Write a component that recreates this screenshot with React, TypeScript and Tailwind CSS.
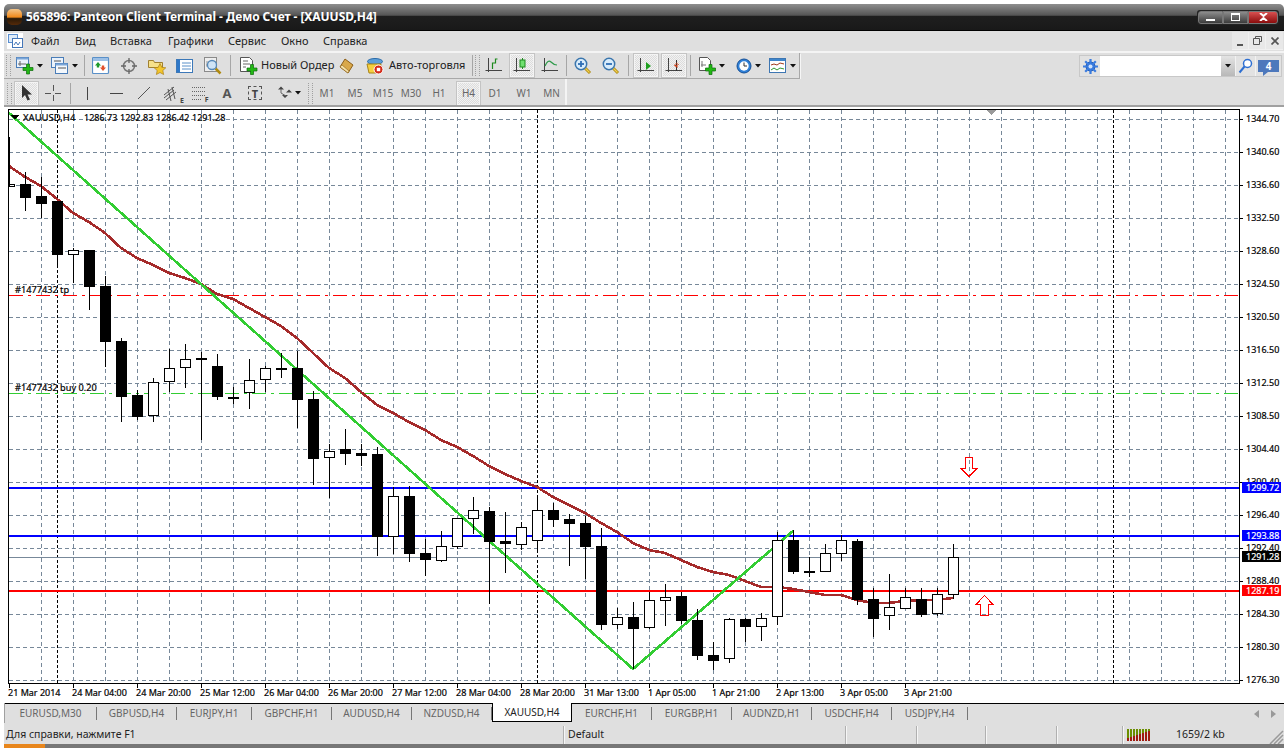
import type { ReactNode } from "react";

const candles: number[][] = [
  [172,184,198,211,1],[177,196,204,218,1],[201,201,255,268,1],[248,250,255,283,0],[250,250,287,310,1],
  [276,286,342,367,1],[338,341,397,422,1],[390,395,417,420,1],[378,382,416,422,0],[349,368,382,392,0],
  [344,359,368,388,0],[352,358,360,440,1],[354,366,397,400,1],[387,397,399,404,1],[359,380,393,409,0],
  [366,368,380,392,0],[353,368,369,378,1],[351,368,400,428,1],[391,399,459,485,1],[444,451,458,498,0],
  [429,449,454,465,1],[444,453,456,466,1],[447,454,537,556,1],[487,496,537,554,0],[486,496,554,562,1],
  [539,553,560,576,1],[531,546,561,562,0],[518,518,547,549,0],[497,510,519,534,0],[507,511,542,604,1],
  [512,541,544,573,1],[522,527,545,550,0],[498,510,541,550,0],[503,510,520,527,1],[514,519,524,566,1],
  [516,523,547,579,1],[528,546,625,630,1],[608,617,625,629,0],[602,617,629,669,1],[592,600,628,629,0],
  [584,597,601,626,0],[592,596,621,624,1],[609,620,656,660,1],[642,655,661,670,1],[618,619,659,663,0],
  [618,619,627,642,1],[613,618,627,641,0],[532,540,617,625,0],[530,540,572,574,1],[557,571,572,577,1],
  [544,553,572,572,0],[535,540,554,561,0],[539,541,600,605,1],[588,599,619,637,1],[574,607,616,630,0],
  [588,597,609,609,0],[588,599,615,617,1],[588,594,614,616,0],[544,557,595,599,0],
];

const ma =
  "9,166 25,177 41,186 57,199 73,213 89,222 105,233 121,248 137,258 153,265 169,273 185,278 201,284 217,294 233,299 249,308 265,317 281,326 297,338 313,353 329,368 345,378 361,392 377,405 393,413 409,422 425,430 441,440 457,447 473,456 489,466 505,474 521,481 537,487 553,497 569,505 585,513 601,523 617,532 633,543 649,550 665,553 681,560 697,567 713,572 729,575 745,581 761,587 777,587 793,589 809,592 825,595 841,595 857,600 873,603 889,603 905,601 921,600 937,600 953,598";

const prices = ["1344.70","1340.60","1336.60","1332.50","1328.60","1324.50","1320.50","1316.50","1312.50","1308.50","1304.40","1300.40","1296.40","1292.40","1288.40","1284.30","1280.30","1276.30"];
const dates = ["21 Mar 2014","24 Mar 04:00","24 Mar 20:00","25 Mar 12:00","26 Mar 04:00","26 Mar 20:00","27 Mar 12:00","28 Mar 04:00","28 Mar 20:00","31 Mar 13:00","1 Apr 05:00","1 Apr 21:00","2 Apr 13:00","3 Apr 05:00","3 Apr 21:00"];
const vgrid = Array.from({ length: 38 }, (_, i) => 41 + 32 * i).filter((x) => x < 1239);

const menus = [
  { t: "Файл", c: "w-[44px]" }, { t: "Вид", c: "w-[35px]" }, { t: "Вставка", c: "w-[58px]" },
  { t: "Графики", c: "w-[60px]" }, { t: "Сервис", c: "w-[53px]" }, { t: "Окно", c: "w-[42px]" }, { t: "Справка", c: "w-[60px]" },
];

const tabs = [
  { t: "EURUSD,M30", c: "w-[92px]" }, { t: "GBPUSD,H4", c: "w-[80px]" }, { t: "EURJPY,H1", c: "w-[75px]" },
  { t: "GBPCHF,H1", c: "w-[80px]" }, { t: "AUDUSD,H4", c: "w-[80px]" }, { t: "NZDUSD,H4", c: "w-[80px]" },
  { t: "XAUUSD,H4", c: "w-[80px]", on: true },
  { t: "EURCHF,H1", c: "w-[80px]" }, { t: "EURGBP,H1", c: "w-[80px]" }, { t: "AUDNZD,H1", c: "w-[80px]" },
  { t: "USDCHF,H4", c: "w-[80px]" }, { t: "USDJPY,H4", c: "w-[76px]" },
];

const pressedCls =
  "border border-[#c4c4c4] bg-[repeating-conic-gradient(#f2f2f2_0_25%,#dcdcdc_0_50%)] bg-[length:2px_2px] shadow-[inset_0_0_0_1px_#f4f4f4]";

function Btn({ className = "w-[28px]", on, children }: { className?: string; on?: boolean; children: ReactNode }) {
  return <div className={`flex h-[25px] shrink-0 items-center justify-center ${className} ${on ? pressedCls : ""}`}>{children}</div>;
}
const Sep = ({ className = "" }: { className?: string }) => <div className={`h-[21px] w-px shrink-0 bg-[#a6a6a6] ${className}`} />;
const Caret = () => <svg width="6" height="4" className="ml-[3px]"><path d="M0 0h6L3 3.500z" fill="#111" /></svg>;
const Grip = ({ className = "" }: { className?: string }) => (
  <div className={`h-[21px] w-[5px] shrink-0 border-x border-dotted border-[#a0a0a0] ${className}`} />
);
const Plus = ({ x, y }: { x: number; y: number }) => (
  <path transform={`translate(${x} ${y})`} d="M3.500 0h3v3.500H10v3H6.500V10h-3V6.500H0v-3h3.500z" fill="#22b814" stroke="#0b6b0b" strokeWidth=".7" />
);

const Ico = ({ w = 18, h = 18, children }: { w?: number; h?: number; children: ReactNode }) => (
  <svg width={w} height={h} viewBox={`0 0 ${w} ${h}`} className="shrink-0">{children}</svg>
);

const Axes = () => <path d="M3.500 1v14M.5 13.500H17" stroke="#444" fill="none" />;

function Lens({ mark }: { mark: "in" | "out" }) {
  return (
    <Ico>
      <path d="M10 10l6 6" stroke="#b08a10" strokeWidth="3" />
      <path d="M10.500 10.500l5 5" stroke="#f0d050" strokeWidth="1.200" />
      <circle cx="7" cy="7" r="5.700" fill="#d8ecfb" stroke="#3b76ad" strokeWidth="1.500" />
      <path d="M4 7h6" stroke="#2f6fb5" strokeWidth="1.800" />
      {mark === "in" && <path d="M7 4v6" stroke="#2f6fb5" strokeWidth="1.800" />}
    </Ico>
  );
}

function ChartPane() {
  const pxDash = "4 3";
  return (
    <svg viewBox="4 107 1280 596" width="1280" height="596" className="block" shapeRendering="crispEdges">
      {vgrid.map((x) => (
        <line key={x} x1={x + 0.5} x2={x + 0.5} y1="110" y2="683" stroke="#778899" strokeDasharray={pxDash} />
      ))}
      {prices.map((_, i) => (
        <line key={i} x1="9" x2="1239" y1={119.5 + 33 * i} y2={119.5 + 33 * i} stroke="#778899" strokeDasharray={pxDash} />
      ))}
      {[57, 537, 1113].map((x) => (
        <line key={x} x1={x + 0.5} x2={x + 0.5} y1="110" y2="683" stroke="#000" strokeDasharray="3 2" />
      ))}

      <line x1="9" x2="1239" y1="295.500" y2="295.500" stroke="#ff0000" strokeDasharray="14 5 3 5" />
      <line x1="9" x2="1239" y1="393.500" y2="393.500" stroke="#32cd32" strokeDasharray="14 5 3 5" />
      <line x1="9" x2="1239" y1="557.500" y2="557.500" stroke="#778899" />
      <rect x="9" y="487" width="1230" height="2" fill="#0000ff" />
      <rect x="9" y="535" width="1230" height="2" fill="#0000ff" />
      <rect x="9" y="590" width="1230" height="2" fill="#ff0000" />

      <g fill="none">
        <polyline points={ma} stroke="#a52a2a" strokeWidth="2.600" />
        <polyline points="9,113 633,669 793,531" stroke="#32cd32" strokeWidth="2.600" />
        <path d="M965.500 457.500h7v11h4.500l-8 8-8-8h4.500z" stroke="#ff0000" />
        <path d="M984.500 595.500l8 8.500h-4v11h-8v-11h-4z" stroke="#ff0000" />
      </g>

      <path d="M986 110h10l-5 5z" fill="#9a9a9a" />
      <path d="M11 115h8l-4 4.500z" fill="#000" />

      <line x1="9.500" x2="9.500" y1="137" y2="187" stroke="#000" />
      <rect x="9.500" y="184.500" width="5" height="2" fill="#fff" stroke="#000" />
      {candles.map(([hi, top, bot, lo, black], i) => {
        const c = 25 + 16 * i;
        return (
          <g key={c}>
            <line x1={c + 0.5} x2={c + 0.5} y1={hi} y2={lo} stroke="#000" />
            <rect x={c - 4.5} y={top + 0.5} width="10" height={Math.max(bot - top - 1, 1)} fill={black ? "#000" : "#fff"} stroke="#000" />
          </g>
        );
      })}

      <rect x="8.500" y="109.500" width="1230.500" height="574" fill="none" stroke="#000" />

      <g shapeRendering="auto" stroke="#000" strokeWidth="0.2" className="fill-black font-['Liberation_Sans',sans-serif] text-[9px]">
        <text y="121">
          <tspan x="23" className="text-[9.500px]">XAUUSD,H4</tspan>
          <tspan x="84">1286.73</tspan>
          <tspan x="120">1292.83</tspan>
          <tspan x="156">1286.42</tspan>
          <tspan x="192">1291.28</tspan>
        </text>
        <text x="15" y="293" className="text-[9.200px]">#1477432 tp</text>
        <text x="15" y="391" className="text-[9.200px]">#1477432 buy 0.20</text>
        {prices.map((p, i) => (
          <text key={p} x="1246" y={122 + 33 * i}>{p}</text>
        ))}
        {dates.map((d, i) => (
          <text key={d} x={8 + 64 * i} y="696">{d}</text>
        ))}
      </g>

      {prices.map((_, i) => (
        <line key={i} x1="1239" x2="1243" y1={119.5 + 33 * i} y2={119.5 + 33 * i} stroke="#000" />
      ))}
      {dates.map((_, i) => (
        <line key={i} x1={9.5 + 64 * i} x2={9.5 + 64 * i} y1="683" y2="688" stroke="#000" />
      ))}

      {[
        { y: 482, f: "#0000ff", t: "1299.72" },
        { y: 530, f: "#0000ff", t: "1293.88" },
        { y: 551, f: "#000000", t: "1291.28" },
        { y: 585, f: "#ff0000", t: "1287.19" },
      ].map((l) => (
        <g key={l.t}>
          <rect x="1242" y={l.y} width="39" height="11" fill={l.f} />
          <text x="1246" y={l.y + 9} shapeRendering="auto" stroke="#fff" strokeWidth="0.2" className="fill-white font-['Liberation_Sans',sans-serif] text-[9px]">{l.t}</text>
        </g>
      ))}
    </svg>
  );
}

function WinBtn({ className, children }: { className: string; children: ReactNode }) {
  return <div className={`flex h-[13px] items-center justify-center border border-[#777] ${className}`}>{children}</div>;
}

export default function App() {
  return (
    <div className="flex h-[748px] w-[1288px] flex-col overflow-hidden bg-white font-['Liberation_Sans',sans-serif] text-[11px] text-[#222]">
      {/* window title */}
      <div className="mx-1 mt-1 flex h-[27px] shrink-0 items-center rounded-t-[5px] border-b border-black bg-[linear-gradient(#8e8e8e_0,#545454_44%,#1f1f1f_45%,#191919_100%)]">
        <div className="ml-[3px] h-[16px] w-[15px] rounded-[5px] bg-[linear-gradient(#f2c58a_0,#f08a1c_50%,#2a1a08_60%,#552a08_100%)]" />
        <span className="ml-[4px] whitespace-nowrap text-[12px] font-bold tracking-[-0.05px] text-white">565896: Panteon Client Terminal - Демо Счет - [XAUUSD,H4]</span>
        <div className="ml-auto mr-[5px] flex rounded-[3px] bg-[#222] p-[1px] pb-[1px]">
          <WinBtn className="w-[25px] rounded-l-[3px] bg-[linear-gradient(#8c8c8c,#3c3c3c)]"><div className="mt-[6px] h-[2px] w-[9px] bg-white" /></WinBtn>
          <WinBtn className="w-[25px] bg-[linear-gradient(#8c8c8c,#3c3c3c)]"><div className="h-[8px] w-[9px] border border-t-2 border-white" /></WinBtn>
          <WinBtn className="w-[30px] rounded-r-[3px] bg-[linear-gradient(#d85050,#8a0c0c)]">
            <svg width="9" height="8"><path d="M1 0l3.500 3L8 0M1 8l3.500-3L8 8" stroke="#fff" strokeWidth="2" fill="none" /></svg>
          </WinBtn>
        </div>
      </div>

      {/* menu */}
      <div className="mx-1 flex h-[20px] shrink-0 items-center bg-[#dfdfdf]">
        <div className="ml-[3px] mr-[8px] flex h-[16px] w-[16px] items-center justify-center bg-white">
          <svg width="15" height="14"><rect x=".5" y=".5" width="9" height="8" fill="#dceaf8" stroke="#5b8fd0" /><rect x="4.500" y="4.500" width="10" height="9" fill="#fff" stroke="#4476b8" /><path d="M6 11l2-3 2 3 2-3" stroke="#4476b8" fill="none" /></svg>
        </div>
        {menus.map((m) => (
          <span key={m.t} className={m.c}>{m.t}</span>
        ))}
        <div className="ml-auto mr-[1px] flex">
          <div className="flex h-[18px] w-[17px] items-end justify-center border-b border-r border-[#f0f0f0] bg-[#e8e8e8] pb-[3px]"><div className="h-[2px] w-[6px] bg-[#555]" /></div>
          <div className="flex h-[18px] w-[17px] items-center justify-center border-b border-r border-[#f0f0f0] bg-[#e8e8e8]"><svg width="9" height="9"><path d="M2.500 2V.5h6v5H7M.5 2.500h6v6h-6z" stroke="#555" fill="none" /></svg></div>
          <div className="flex h-[18px] w-[17px] items-center justify-center border-b border-[#f0f0f0] bg-[#e8e8e8]"><svg width="8" height="8"><path d="M.5.5l7 7M7.500.5l-7 7" stroke="#555" strokeWidth="1.700" /></svg></div>
        </div>
      </div>

      {/* toolbar one */}
      <div className="mx-1 flex h-[28px] shrink-0 items-center border-t-2 border-[#f4f4f4] bg-[#dfdfdf]">
        <div className="flex h-[26px] w-[796px] shrink-0 items-center border-b border-r border-[#a8a8a8] shadow-[1px_1px_0_#f6f6f6]">
          <Grip className="ml-[2px] mr-[4px]" />
          <Btn className="w-[28px]">
            <Ico><rect x=".5" y=".5" width="12" height="10" fill="#eaf2fb" stroke="#4a7db8" /><path d="M.5.5h12v2H.5z" fill="#7aa6d8" /><path d="M4 4v5M2 7h8" stroke="#666" /><Plus x={7} y={7} /></Ico>
            <Caret />
          </Btn>
          <Btn className="ml-[7px] w-[28px]">
            <Ico><rect x=".5" y=".5" width="12" height="10" fill="#eaf2fb" stroke="#4a7db8" /><rect x="4.500" y="6.500" width="12" height="10" fill="#f4f8fc" stroke="#4a7db8" /><path d="M7 11h8M3 4h7" stroke="#555" /><path d="M4.500 6.500h12v2h-12z" fill="#7aa6d8" /></Ico>
            <Caret />
          </Btn>
          <Sep className="ml-[6px] mr-[2px]" />
          <Btn>
            <Ico><rect x=".5" y=".5" width="16" height="16" rx="1" fill="#fff" stroke="#5a90c8" strokeWidth="1.200" /><path d="M1 1h15v3H1z" fill="#9cc0e6" /><path d="M6 5l3 3.500H7.200v2H4.800v-2H3z" fill="#1e9a2a" /><path d="M11 14l3-3.500h-1.800v-2H9.800v2H8z" fill="#e0502c" /></Ico>
          </Btn>
          <Btn>
            <Ico><circle cx="9" cy="9" r="5.500" fill="none" stroke="#777" strokeWidth="1.500" /><path d="M9 1v5M9 12v5M1 9h5M12 9h5" stroke="#666" strokeWidth="1.300" /></Ico>
          </Btn>
          <Btn>
            <Ico><path d="M.5 3.500h5l1 2h8v5h-14z" fill="#f6e08a" stroke="#a08030" /><path d="M12 6.500l1.800 3.800 4 .5-3 2.700.8 4-3.600-2-3.600 2 .8-4-3-2.700 4-.5z" fill="#f3c62e" stroke="#a97e14" strokeWidth=".7" /></Ico>
          </Btn>
          <Btn>
            <Ico><rect x=".5" y="2.500" width="16" height="13" fill="#fff" stroke="#3c78b8" /><rect x="1" y="3" width="3" height="12" fill="#2f78c8" /><path d="M6 6h9M6 9h9M6 12h9" stroke="#5a90c8" /></Ico>
          </Btn>
          <Btn>
            <Ico><rect x=".5" y=".5" width="12" height="14" fill="#eee" stroke="#8a8a8a" /><path d="M3 4v6M2 8h7" stroke="#999" /><path d="M11.500 11.500l5 5" stroke="#b08a10" strokeWidth="2.500" /><circle cx="8" cy="8" r="4.500" fill="#cfe4f6" stroke="#5588b8" strokeWidth="1.300" /></Ico>
          </Btn>
          <Sep className="ml-[3px] mr-[4px]" />
          <Btn className="w-[98px] justify-start pl-[5px]">
            <Ico><path d="M.5.5h9l3 3v11h-12z" fill="#fff" stroke="#555" /><path d="M3 4h5M3 7h7M3 10h3" stroke="#666" /><Plus x={7} y={7.500} /></Ico>
            <span className="ml-[3px] whitespace-nowrap">Новый Ордер</span>
          </Btn>
          <Btn>
            <Ico><path d="M7 2l8 6-5 8-8-6z" fill="#d9a84a" stroke="#8c5f18" /><path d="M2 10l8 6 1-2-7-6z" fill="#f5e1a8" stroke="#8c5f18" strokeWidth=".6" /></Ico>
          </Btn>
          <Btn className="w-[108px] justify-start pl-[5px]">
            <Ico><ellipse cx="9" cy="4.500" rx="7.500" ry="3" fill="#5c9fd8" stroke="#2a6aa8" /><path d="M1 7h14l-1 9H3z" fill="#f5d040" stroke="#a88418" /><circle cx="12.500" cy="12.500" r="4.500" fill="#d42a18" stroke="#fff" /><rect x="10.800" y="10.800" width="3.400" height="3.400" fill="#fff" /></Ico>
            <span className="ml-[5px] whitespace-nowrap">Авто-торговля</span>
          </Btn>
          <div className="ml-[3px] h-[21px] w-px shrink-0 bg-[#a6a6a6]" />
          <Grip className="ml-[2px]" />
          <Btn>
            <Ico><Axes /><path d="M7.500 12V6h3V2h2" stroke="#1e8a1e" fill="none" strokeWidth="1.200" /></Ico>
          </Btn>
          <Btn on className="ml-[1px] w-[26px]">
            <Ico><Axes /><path d="M9.500 1v11" stroke="#1e8a1e" /><rect x="7" y="3" width="5" height="7" fill="#6fe06f" stroke="#1e8a1e" /></Ico>
          </Btn>
          <Btn className="ml-[1px] w-[28px]">
            <Ico><Axes /><path d="M4 9q3-7 6-4t6 3" stroke="#2e9a4a" fill="none" strokeWidth="1.200" /></Ico>
          </Btn>
          <Sep className="ml-[2px] mr-[2px]" />
          <Btn><Lens mark="in" /></Btn>
          <Btn><Lens mark="out" /></Btn>
          <Sep className="ml-[3px] mr-[4px]" />
          <Btn on className="w-[26px]">
            <Ico><Axes /><path d="M9 5l5 4-5 4z" fill="#1ea01e" /></Ico>
          </Btn>
          <Btn on className="ml-[2px] w-[26px]">
            <Ico><Axes /><path d="M11.500 3v11" stroke="#333" /><path d="M14 8l-5 0 3-2.500zM9 8.500l3.500 2.500v-5z" fill="#c83a14" /></Ico>
          </Btn>
          <Sep className="ml-[3px] mr-[8px]" />
          <Btn className="w-[26px]">
            <Ico w={17}><path d="M.5.5h8l3 3v10H.5z" fill="#fff" stroke="#555" /><path d="M3 4v6M2 8h5" stroke="#777" /><Plus x={6.500} y={7.500} /></Ico>
            <Caret />
          </Btn>
          <Btn className="ml-[8px] w-[30px]">
            <Ico w={16}><circle cx="8" cy="9" r="7" fill="#2f80d8" stroke="#154f96" /><circle cx="8" cy="9" r="4.700" fill="#fff" /><path d="M8 5.500V9h3" stroke="#333" fill="none" /></Ico>
            <Caret />
          </Btn>
          <Btn className="ml-[5px] w-[29px]">
            <Ico><rect x=".5" y="1.500" width="16" height="14" fill="#fff" stroke="#3e76b2" /><path d="M1 2h15v2H1z" fill="#3e86cc" /><path d="M2 8l3-1 3 1 3-2 4 1" stroke="#a03a1a" fill="none" /><path d="M2 13l3-2 3 2 3-2 4 1" stroke="#2e9a2e" fill="none" /></Ico>
            <Caret />
          </Btn>
        </div>
        <div className="ml-auto mr-[2px] flex h-[22px] w-[203px] items-center border border-[#c8c8c8] bg-[#e2e2e2]">
          <div className="flex w-[20px] justify-center">
            <svg width="15" height="15" viewBox="0 0 15 15"><circle cx="7.500" cy="7.500" r="4.500" fill="#2f6fd0" stroke="#1b4fa0" /><path d="M7.500 0v15M0 7.500h15M2.200 2.200l10.600 10.600M12.800 2.200L2.200 12.800" stroke="#3a7ce0" strokeWidth="2.200" /><circle cx="7.500" cy="7.500" r="2" fill="#cfe2fb" /></svg>
          </div>
          <div className="h-full w-[121px] bg-white" />
          <div className="flex h-full w-[14px] items-center justify-center bg-[linear-gradient(#e4e4e4,#b8b8b8)]"><svg width="6" height="4"><path d="M0 0h6L3 3.500z" fill="#111" /></svg></div>
          <div className="flex h-full w-[20px] items-center justify-center border-l border-[#f2f2f2]">
            <svg width="15" height="16" viewBox="0 0 15 16"><circle cx="9.500" cy="5.500" r="4" fill="#fff" stroke="#2d6fd2" strokeWidth="1.500" /><path d="M6.500 8.500l-5 6" stroke="#2d6fd2" strokeWidth="2" /></svg>
          </div>
          <div className="flex h-full flex-1 items-center justify-center border-l border-[#f2f2f2]">
            <div className="relative flex h-[12px] w-[21px] items-center justify-center bg-[#4d78bc] text-[10px] font-bold leading-none text-white">
              4
              <div className="absolute left-[5px] top-[12px] h-0 w-0 border-r-[5px] border-t-[4px] border-r-transparent border-t-[#4d78bc]" />
            </div>
          </div>
        </div>
      </div>

      {/* toolbar two */}
      <div className="mx-1 flex h-[26px] shrink-0 items-center bg-[#dfdfdf]">
        <div className="flex h-[26px] w-[563px] shrink-0 items-center border-r-2 border-[#f4f4f4] pt-[2px]">
          <Grip className="ml-[3px] mr-[2px]" />
          <Btn on className="w-[25px]">
            <svg width="11" height="16" viewBox="0 0 11 16"><path d="M1 0v13l3-3 2.500 5.500 2.500-1L6.500 9.500H11z" fill="#333" /></svg>
          </Btn>
          <Btn>
            <svg width="16" height="16"><path d="M8.500 0v6M8.500 10v6M0 8.500h6M10 8.500h6" stroke="#555" /></svg>
          </Btn>
          <Sep className="ml-[3px] mr-[2px]" />
          <Btn><div className="h-[13px] w-px bg-[#444]" /></Btn>
          <Btn className="ml-[1px] w-[28px]"><div className="h-px w-[13px] bg-[#444]" /></Btn>
          <Btn><svg width="14" height="14"><path d="M1 13L13 1" stroke="#555" /></svg></Btn>
          <Btn>
            <div className="relative h-[17px] w-[18px]">
              <svg width="18" height="17"><path d="M1 10l10-8M1 13l10-8M3 15l10-8M5 4l3 12M9 2l3 12" stroke="#555" fill="none" /></svg>
              <span className="absolute -bottom-[2px] -right-[3px] text-[7px] font-bold leading-none text-[#444]">E</span>
            </div>
          </Btn>
          <Btn className="w-[27px]">
            <div className="relative h-[16px] w-[16px]">
              <svg width="16" height="16"><path d="M0 2.500h14M0 6.500h14M0 10.500h14" stroke="#666" strokeDasharray="1 1" /><path d="M0 14.500h9" stroke="#666" strokeDasharray="1 1" /></svg>
              <span className="absolute -bottom-[2px] -right-[1px] text-[7px] font-bold leading-none text-[#444]">F</span>
            </div>
          </Btn>
          <Btn><span className="text-[13px] font-bold leading-none text-[#555]">A</span></Btn>
          <Btn>
            <div className="flex h-[14px] w-[14px] items-center justify-center border border-dashed border-[#555] text-[11px] font-bold leading-none text-[#444]">T</div>
          </Btn>
          <Btn className="w-[36px] pl-[2px]">
            <svg width="16" height="14" viewBox="0 0 16 14"><path d="M2 3.500l3-3 3 3zM6 9l3 3 3-3zM10 6.500l3-3 3 3z" fill="#444" /><path d="M5 3v4l5 3" stroke="#666" fill="none" /></svg>
            <Caret />
          </Btn>
          <Grip className="ml-[3px]" />
          {["M1", "M5", "M15", "M30", "H1"].map((t) => (
            <Btn key={t} className="w-[28px]"><span className="text-[10px] text-[#666]">{t}</span></Btn>
          ))}
          <Btn on className="ml-[3px] w-[25px]"><span className="text-[10px] text-[#666]">H4</span></Btn>
          <Btn><span className="text-[10px] text-[#666]">D1</span></Btn>
          <Btn className="ml-[1px] w-[28px]"><span className="text-[10px] text-[#666]">W1</span></Btn>
          <Btn className="w-[27px]"><span className="text-[10px] text-[#666]">MN</span></Btn>
        </div>
      </div>

      {/* chart */}
      <div className="mx-1 h-[598px] shrink-0 border-t-2 border-[#a0a0a0] bg-white">
        <div className="h-[596px] w-[1280px]">
          <ChartPane />
        </div>
      </div>

      {/* tabs */}
      <div className="mx-1 flex h-[20px] shrink-0 items-start border-l border-[#a0a0a0] bg-[#dfdfdf] text-[10px] text-[#666]">
        {tabs.map((t) =>
          t.on ? (
            <div key={t.t} className={`flex h-[19px] shrink-0 items-center justify-center border-x border-b border-black bg-white text-[#222] ${t.c}`}>{t.t}</div>
          ) : (
            <div key={t.t} className={`flex h-[20px] shrink-0 items-center border-t border-black ${t.c}`}>
              <div className="flex h-[13px] w-full items-center justify-center border-r border-[#777]">{t.t}</div>
            </div>
          ),
        )}
        <div className="flex h-[20px] flex-1 items-center justify-end gap-[12px] border-t border-black pr-[8px]">
          <svg width="5" height="8"><path d="M5 0v8L0 4z" fill="#999" /></svg>
          <svg width="5" height="8"><path d="M0 0v8l5-4z" fill="#999" /></svg>
        </div>
      </div>

      {/* status */}
      <div className="mx-1 flex h-[21px] shrink-0 items-center bg-[#dfdfdf] pt-[2px] text-[10.500px]">
        <div className="flex h-[18px] w-[560px] items-center border-r border-[#b0b0b0] pl-[2px] shadow-[1px_0_0_#f6f6f6]">Для справки, нажмите F1</div>
        <div className="flex h-[18px] w-[282px] items-center border-r border-[#b0b0b0] pl-[4px] shadow-[1px_0_0_#f6f6f6]">Default</div>
        <div className="h-[18px] w-[71px] border-r border-[#b0b0b0] shadow-[1px_0_0_#f6f6f6]" />
        <div className="h-[18px] w-[69px] border-r border-[#b0b0b0] shadow-[1px_0_0_#f6f6f6]" />
        <div className="h-[18px] w-[71px] border-r border-[#b0b0b0] shadow-[1px_0_0_#f6f6f6]" />
        <div className="h-[18px] w-[66px] border-r border-[#b0b0b0] shadow-[1px_0_0_#f6f6f6]" />
        <svg width="24" height="12" className="ml-[4px]" shapeRendering="crispEdges">
          {[0, 1, 2, 3, 4, 5, 6, 7].map((i) => (
            <g key={i}>
              <rect x={i * 3} y="0" width="2" height="12" fill="#6b8e00" />
              <rect x={i * 3} y={9 - i} width="2" height={3 + i} fill="#a01a10" />
            </g>
          ))}
        </svg>
        <span className="ml-[25px]">1659/2 kb</span>
        <svg width="15" height="14" className="ml-auto self-end"><path d="M14 1L1 14M14 5L5 14M14 9l-5 5" stroke="#9a9a9a" strokeWidth="1.500" /></svg>
      </div>

      {/* taskbar sliver */}
      <div className="mx-1 flex h-1 shrink-0 bg-[#777]">
        <div className="h-full w-[41px] bg-[#e8861c]" />
      </div>
    </div>
  );
}
